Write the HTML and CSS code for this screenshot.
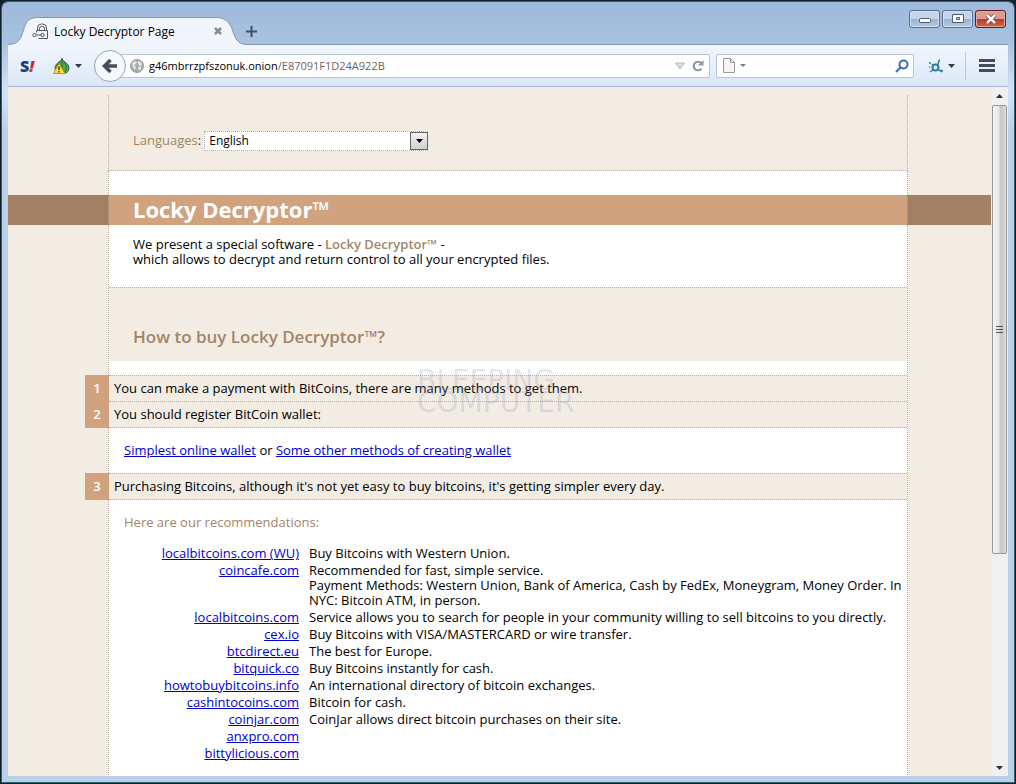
FILE: index.html
```
<!DOCTYPE html>
<html lang="en">
<head>
    <meta charset="UTF-8">
    <meta name="viewport" content="width=device-width, initial-scale=1.0">
    <title>Locky Decryptor Page</title>
    <link rel="stylesheet" href="styles.css">
</head>
<body>
<div class="window">
    <header class="titlebar">
        <div class="tab">
            <svg class="tab-shape" viewBox="0 0 240 28" preserveAspectRatio="none">
                <path d="M0 27.5C12 27 13 21 16 12C18 4 22 .5 30 .5H210C218 .5 223 4 226 12C229 21 231 27 240 27.5V28H0Z" fill="#f2f6fc"/>
                <path d="M0 27.5C12 27 13 21 16 12C18 4 22 .5 30 .5H210C218 .5 223 4 226 12C229 21 231 27 240 27.5" fill="none" stroke="#8095b4"/>
            </svg>
            <svg class="lock-icon" viewBox="0 0 17 17" fill="none" stroke="#555b63">
                <path d="M5.500 7.500V5a4 4 0 0 1 4-4h1a4 4 0 0 1 4 4v2.500M7.500 7.500V5.500a2 2 0 0 1 2-2h1a2 2 0 0 1 2 2v2M4.500 9.500v-2h11v8h-9"/>
                <circle cx="2.500" cy="12" r="1.700"/>
                <path d="M4.500 12h5"/>
                <circle cx="10.500" cy="12" r="1.700"/>
            </svg>
            <span class="tab-title">Locky Decryptor Page</span>
            <button class="plain" aria-label="Close tab">
                <svg width="8" height="8" viewBox="0 0 8 8"><path d="M1 1l6 6M7 1l-6 6" stroke="#858c96" stroke-width="2.500"/></svg>
            </button>
        </div>
        <button class="plain new-tab" aria-label="New tab">
            <svg width="11" height="11" viewBox="0 0 11 11"><path d="M5.500 0v11M0 5.500h11" stroke="#3d4d62" stroke-width="2"/></svg>
        </button>
        <div class="window-buttons">
            <button class="minimize" aria-label="Minimize">
                <svg width="12" height="6" viewBox="0 0 12 6"><rect x=".5" y=".5" width="11" height="4" rx="1" fill="#fff" stroke="#4e5b70"/></svg>
            </button>
            <button aria-label="Maximize">
                <svg width="12" height="10" viewBox="0 0 12 10"><path d="M.5.5h11v8H.5zM4.500 3.500h3v2h-3z" fill="#fff" fill-rule="evenodd" stroke="#4e5b70"/></svg>
            </button>
            <button class="close" aria-label="Close">
                <svg width="12" height="10" viewBox="0 0 12 10"><path d="M2 1l8 8M10 1l-8 8" stroke="#6b3336" stroke-width="4"/><path d="M2 1l8 8M10 1l-8 8" stroke="#fff" stroke-width="2.500"/></svg>
            </button>
        </div>
    </header>

    <nav class="toolbar">
        <button class="plain noscript" aria-label="NoScript">
            <span class="s">S</span><span class="bang">!</span>
        </button>
        <button class="plain onion" aria-label="Tor button">
            <svg width="18" height="18" viewBox="0 0 18 18">
                <path d="M9 1.500C9 4 2 6 2 11C2 15 5 16.500 9 16.500S16 15 16 11C16 6 9 4 9 1.500Z" fill="#43b649" stroke="#4d5560"/>
                <path d="M9 1v15M11 5c3 3 3 8 0 11M7 5C5 6 4 8 4 10" fill="none" stroke="#3b5a45"/>
                <path d="M6 6.500L12 16.500H.5Z" fill="#ffe03a" stroke="#b8981c"/>
                <path d="M6 9.500v3.500M6 14v1.500" stroke="#473800" stroke-width="1.500"/>
            </svg>
            <svg width="7" height="4" viewBox="0 0 7 4"><path d="M0 0h7L3.500 4z" fill="#2f3c52"/></svg>
        </button>
        <button class="back" aria-label="Back">
            <svg width="16" height="16" viewBox="0 0 16 16"><path d="M8.500 2L2.500 8l6 6M3 8h12" fill="none" stroke="#474d56" stroke-width="3.500"/></svg>
        </button>
        <div class="url-box">
            <svg width="14" height="14" viewBox="0 0 14 14">
                <circle cx="7" cy="7" r="6.500" fill="#a9abad" stroke="#9a9c9f"/>
                <path d="M2 4l3-2 2 1-1 2-2 1 2 2-1 3-2-2zM8 2l3 1 1 3-2 1-2-2zM8 8l3-1 0 3-2 2z" fill="#e4e5e6"/>
            </svg>
            <span class="url" role="textbox" contenteditable="true"><span class="host">g46mbrrzpfszonuk.onion</span>/E87091F1D24A922B</span>
            <svg width="10" height="8" viewBox="0 0 10 8"><path d="M.5 1h9L5 7z" fill="#dadde0" stroke="#b4b8bd"/></svg>
            <button class="plain" aria-label="Reload">
                <svg width="12" height="12" viewBox="0 0 12 12"><path d="M9.500 8.500A4.300 4.300 0 1 1 9 3" fill="none" stroke="#8c929a" stroke-width="2"/><path d="M11.500 0v5.500H6z" fill="#8c929a"/></svg>
            </button>
        </div>
        <div class="search-box">
            <svg width="12" height="15" viewBox="0 0 12 15"><path d="M.5.5h7l4 4v10H.5zM7.500.5v4h4" fill="#f5f5f5" stroke="#9a9a9a"/></svg>
            <svg width="6" height="3" viewBox="0 0 6 3"><path d="M0 0h6L3 3z" fill="#777c82"/></svg>
            <input type="text" aria-label="Search">
            <button class="plain" aria-label="Go">
                <svg width="14" height="14" viewBox="0 0 14 14" fill="none" stroke="#3c6da5" stroke-width="2"><circle cx="8.500" cy="5.500" r="4"/><path d="M5.500 8.500L1 13"/></svg>
            </button>
        </div>
        <button class="plain addon" aria-label="Add-on">
            <svg width="16" height="14" viewBox="0 0 16 14" fill="none" stroke="#2d7ea6"><circle cx="7.500" cy="8.500" r="3" stroke-width="2"/><path d="M9.500 6.500L11.500.5M5 11l-3 2M10 11l4 1" stroke-width="1.500"/><path d="M1 4h2M1 8h1M4 5l1 1" stroke-width="1.500"/><circle cx="13.500" cy="12" r="1" fill="#2d7ea6"/></svg>
            <svg width="7" height="4" viewBox="0 0 7 4"><path d="M0 0h7L3.500 4z" fill="#2f3c52"/></svg>
        </button>
        <button class="plain menu" aria-label="Open menu">
            <svg width="16" height="13" viewBox="0 0 16 13"><path d="M0 1.500h16M0 6.500h16M0 11.500h16" stroke="#414b5c" stroke-width="3"/></svg>
        </button>
    </nav>

    <div class="viewport">
        <main class="page">
            <div class="sheet languages">
                <label for="lang">Languages<span>:</span></label>
                <div class="select-box">
                    <select id="lang">
                        <option>English</option>
                    </select>
                    <span class="select-arrow"><svg width="7" height="4" viewBox="0 0 7 4"><path d="M0 0h7L3.500 4z"/></svg></span>
                </div>
            </div>
            <div class="sheet spacer"></div>
            <div class="band">
                <h1 class="sheet">Locky Decryptor™</h1>
            </div>
            <div class="sheet content">
                <p class="intro">We present a special software - <strong>Locky Decryptor™</strong> -<br>which allows to decrypt and return control to all your encrypted files.</p>
                <h2>How to buy Locky Decryptor™?</h2>
                <div class="step"><b>1</b><span>You can make a payment with BitCoins, there are many methods to get them.</span></div>
                <div class="step joined"><b>2</b><span>You should register BitCoin wallet:</span></div>
                <p class="wallets"><a href="#">Simplest online wallet</a> or <a href="#">Some other methods of creating wallet</a></p>
                <div class="step"><b>3</b><span>Purchasing Bitcoins, although it's not yet easy to buy bitcoins, it's getting simpler every day.</span></div>
                <p class="recommend">Here are our recommendations:</p>
                <table class="exchanges">
                    <tr><td><a href="#">localbitcoins.com (WU)</a></td><td>Buy Bitcoins with Western Union.</td></tr>
                    <tr><td><a href="#">coincafe.com</a></td><td>Recommended for fast, simple service.<br>Payment Methods: Western Union, Bank of America, Cash by FedEx, Moneygram, Money Order. In NYC: Bitcoin ATM, in person.</td></tr>
                    <tr><td><a href="#">localbitcoins.com</a></td><td>Service allows you to search for people in your community willing to sell bitcoins to you directly.</td></tr>
                    <tr><td><a href="#">cex.io</a></td><td>Buy Bitcoins with VISA/MASTERCARD or wire transfer.</td></tr>
                    <tr><td><a href="#">btcdirect.eu</a></td><td>The best for Europe.</td></tr>
                    <tr><td><a href="#">bitquick.co</a></td><td>Buy Bitcoins instantly for cash.</td></tr>
                    <tr><td><a href="#">howtobuybitcoins.info</a></td><td>An international directory of bitcoin exchanges.</td></tr>
                    <tr><td><a href="#">cashintocoins.com</a></td><td>Bitcoin for cash.</td></tr>
                    <tr><td><a href="#">coinjar.com</a></td><td>CoinJar allows direct bitcoin purchases on their site.</td></tr>
                    <tr><td><a href="#">anxpro.com</a></td><td></td></tr>
                    <tr><td><a href="#">bittylicious.com</a></td><td></td></tr>
                </table>
            </div>
        </main>
        <div class="scrollbar">
            <svg width="7" height="4" viewBox="0 0 7 4"><path d="M0 4h7L3.500 0z" fill="#333"/></svg>
            <div class="thumb"><i></i><i></i><i></i></div>
            <svg width="7" height="4" viewBox="0 0 7 4"><path d="M0 0h7L3.500 4z" fill="#333"/></svg>
        </div>
    </div>
</div>
<div class="watermark">BLEEPING<br>COMPUTER</div>
</body>
</html>
```

FILE: styles.css
```
* {
    box-sizing: border-box;
}

body {
    margin: 0;
    height: 100vh;
    padding: 2px;
    background: #10202c;
    font-family: "Open Sans", "Noto Sans", sans-serif;
    font-size: 12px;
    overflow: hidden;
}

button, input, select {
    font-family: inherit;
    font-size: inherit;
}

.window {
    height: 100%;
    display: flex;
    flex-direction: column;
    padding: 0 6px 6px;
    border-radius: 6px 6px 0 0;
    background: linear-gradient(#9db9da, #a9c2e0 40px, #d3e3f5 90px, #bad1ea 130px);
    box-shadow: 0 0 0 1px #35606f;
}

.plain {
    padding: 0;
    border: 0;
    background: none;
    display: flex;
    align-items: center;
}

/* title bar */
.titlebar {
    height: 43px;
    flex: none;
    display: flex;
    align-items: flex-end;
    border-bottom: 1px solid #8095b4;
}

.tab {
    position: relative;
    width: 238px;
    height: 28px;
    margin-bottom: -1px;
    padding: 0 16px 0 24px;
    display: flex;
    align-items: center;
    gap: 5px;
}

.tab svg {
    position: relative;
}

.tab .tab-shape {
    position: absolute;
    left: 0;
    top: 0;
    width: 100%;
    height: 100%;
}

.lock-icon {
    width: 17px;
    height: 17px;
}

.tab-title {
    position: relative;
    flex: 1;
}

.tab button {
    margin-right: 8px;
}

.new-tab {
    padding: 0 0 7px;
}

.window-buttons {
    margin-left: auto;
    align-self: flex-start;
    display: flex;
    gap: 2px;
    padding: 8px 2px 0 0;
}

.window-buttons button {
    width: 31px;
    height: 18px;
    padding: 0;
    display: flex;
    align-items: center;
    justify-content: center;
    border: 1px solid #5a6f90;
    border-radius: 3px;
    background: linear-gradient(#c3d5ea 50%, #98b2d1 50%, #b4cbe5);
    box-shadow: inset 0 0 0 1px #d2e0f0;
}

.window-buttons .minimize {
    padding-top: 4px;
}

.window-buttons .close {
    border-color: #5c1c1f;
    background: linear-gradient(#dd9b8f 50%, #bd3a25 50%, #d0674e);
    box-shadow: inset 0 0 0 1px #e2a99e;
}

/* toolbar */
.toolbar {
    height: 42px;
    flex: none;
    display: flex;
    align-items: center;
    padding: 0 13px 0 12px;
    background: linear-gradient(#f2f6fc, #dbe8f8);
    border-bottom: 1px solid #a3bcdc;
}

.noscript {
    width: 33px;
    font-size: 16px;
    font-weight: 800;
    font-style: italic;
}

.noscript .s {
    color: #1f3c86;
    font-style: normal;
}

.noscript .bang {
    color: #d8232c;
}

.onion {
    gap: 4px;
}

.back {
    position: relative;
    flex: none;
    width: 32px;
    height: 32px;
    margin-left: 12px;
    padding: 0;
    display: flex;
    align-items: center;
    justify-content: center;
    border: 1px solid #93a5bf;
    border-radius: 50%;
    background: #f5f9fd;
}

.url-box, .search-box {
    height: 24px;
    display: flex;
    align-items: center;
    background: #fff;
    border: 1px solid #b4c6dc;
    border-radius: 2px;
}

.url-box {
    flex: 1;
    margin: 0 6px 0 -8px;
    padding: 0 5px 0 11px;
    gap: 5px;
}

.url {
    flex: 1;
    color: #666;
    font-size: 11px;
    outline: 0;
}

.url .host {
    color: #000;
}

.url-box button {
    margin-left: 2px;
}

.search-box {
    width: 198px;
    padding: 0 4px 0 6px;
    gap: 5px;
}

.search-box input {
    flex: 1;
    min-width: 0;
    border: 0;
    outline: 0;
    background: none;
}

.addon {
    gap: 4px;
    margin-left: 14px;
}

.menu {
    height: 28px;
    margin-left: 10px;
    padding-left: 13px;
    border-left: 1px solid #b9c8da;
}

/* page */
.viewport {
    flex: 1;
    min-height: 0;
    display: flex;
    background: #f2ece3;
}

.page {
    flex: 1;
    min-width: 0;
    overflow: hidden;
    padding-top: 8px;
    font-family: "Open Sans", "Noto Sans", sans-serif;
    font-size: 13px;
    line-height: 15px;
    color: #000;
}

.page a {
    color: #0000cc;
}

.sheet {
    width: 800px;
    margin: 0 83px 0 100px;
    border: dotted #c0ada0;
    border-width: 0 1px;
}

.languages {
    height: 76px;
    display: flex;
    align-items: center;
    gap: 3px;
    padding: 16px 24px 0;
    border-bottom-width: 1px;
}

.languages label {
    color: #a28568;
}

.languages label span {
    color: #333;
}

.select-box {
    position: relative;
    width: 224px;
    height: 20px;
}

.select-box select {
    width: 100%;
    height: 100%;
    padding: 0 4px;
    appearance: none;
    border: 1px dotted #b7aba0;
    border-radius: 0;
    background: #fff;
    color: #000;
    font-size: 12px;
}

.select-arrow {
    position: absolute;
    right: 0;
    top: 1px;
    width: 18px;
    height: 18px;
    display: flex;
    align-items: center;
    justify-content: center;
    border: 1px solid #666;
    background: linear-gradient(#f4f4f4, #cfcfcf);
    pointer-events: none;
}

.spacer {
    height: 24px;
    background: #fff;
}

.band {
    background: #a37f64;
}

.band h1 {
    padding: 0 24px 2px;
    background: #d0a37e;
    color: #fff;
    font-size: 22px;
    line-height: 28px;
    border-color: #a37f64;
}

.content {
    background: #fff;
    min-height: 560px;
}

.intro {
    margin: 0;
    padding: 12px 24px 20px;
}

.intro strong {
    color: #a28568;
    font-weight: 600;
}

.content h2 {
    margin: 0 0 14px;
    padding: 36px 24px 12px;
    border-top: 1px dotted #c0ada0;
    background: #f2ece3;
    color: #a28568;
    font-size: 17px;
    font-weight: 600;
    line-height: 25px;
}

.step {
    display: flex;
    margin-left: -24px;
    line-height: 25px;
}

.step b {
    width: 24px;
    padding-top: 1px;
    background: #d0a37e;
    color: #fff;
    text-align: center;
    font-weight: 600;
}

.step span {
    flex: 1;
    padding-left: 5px;
    border: dotted #c0ada0;
    border-width: 1px 0;
    background: #f2ece3;
}

.joined {
    margin-top: -1px;
}

.wallets {
    margin: 0;
    padding: 15px;
}

.recommend {
    margin: 0;
    padding: 15px 15px 14px;
    color: #a28568;
}

.exchanges {
    width: 784px;
    margin-left: 13px;
    border-spacing: 2px;
}

.exchanges td {
    padding: 0;
    vertical-align: top;
}

.exchanges td:first-child {
    width: 175px;
    text-align: right;
}

.exchanges td:last-child {
    padding-left: 8px;
}

/* scroll bar */
.scrollbar {
    width: 17px;
    display: flex;
    flex-direction: column;
    align-items: center;
    padding: 7px 0 6px;
    background: #f0f0f0;
}

.scrollbar svg:last-child {
    margin-top: auto;
}

.thumb {
    width: 15px;
    height: 449px;
    margin-top: 7px;
    display: flex;
    flex-direction: column;
    align-items: center;
    justify-content: center;
    gap: 2px;
    border: 1px solid #979797;
    border-radius: 2px;
    background: linear-gradient(to right, #f5f5f5, #e4e4e4 45%, #c4c4c8 60%, #dcdcdc);
}

.thumb i {
    width: 7px;
    height: 1px;
    background: #555;
}

.watermark {
    position: absolute;
    left: 417px;
    top: 370px;
    color: rgba(140, 155, 195, 0.25);
    font: 28px/22px "DejaVu Sans", sans-serif;
    pointer-events: none;
}
```
